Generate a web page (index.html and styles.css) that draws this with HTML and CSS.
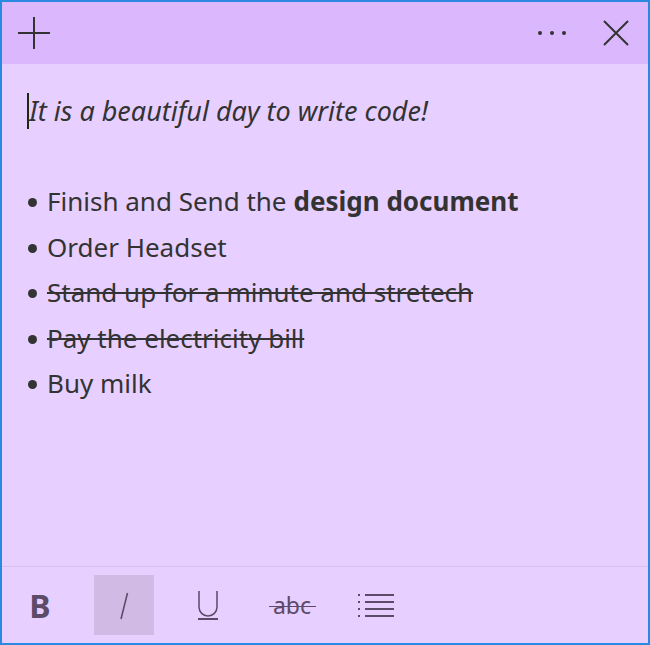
FILE: index.html
```html
<!DOCTYPE html>
<html lang="en">
<head>
<meta charset="utf-8">
<title>Sticky Note</title>
<link rel="stylesheet" href="styles.css">
</head>
<body>
<div class="window">
  <header class="titlebar">
    <button class="tb-btn" aria-label="New note">
      <svg width="32" height="32" viewBox="0 0 32 32"><path d="M0 16H32M16 0V32" stroke="#333" stroke-width="2" fill="none"/></svg>
    </button>
    <div class="tb-right">
      <button class="tb-btn" aria-label="More">
        <svg width="32" height="8" viewBox="0 0 32 8"><circle cx="4" cy="4" r="2" fill="#333"/><circle cx="16" cy="4" r="2" fill="#333"/><circle cx="28" cy="4" r="2" fill="#333"/></svg>
      </button>
      <button class="tb-btn" aria-label="Close">
        <svg width="26" height="26" viewBox="0 0 26 26"><path d="M1 1L25 25M25 1L1 25" stroke="#333" stroke-width="2" fill="none"/></svg>
      </button>
    </div>
  </header>
  <main class="content">
    <p class="line intro"><span class="caret"></span>It is a beautiful day to write code!</p>
    <p class="line empty"></p>
    <ul class="items">
      <li class="line">Finish and Send the <b>design document</b></li>
      <li class="line">Order Headset</li>
      <li class="line done">Stand up for a minute and stretech</li>
      <li class="line done">Pay the electricity bill</li>
      <li class="line">Buy milk</li>
    </ul>
  </main>
  <footer class="toolbar">
    <button class="fmt bold" aria-label="Bold">B</button>
    <button class="fmt active" aria-label="Italic">
      <svg width="20" height="30" viewBox="0 0 20 30"><path d="M13.5 3L7 29" stroke="#5b4b68" stroke-width="1.5" fill="none"/></svg>
    </button>
    <button class="fmt" aria-label="Underline">
      <svg width="24" height="32" viewBox="0 0 24 32"><path d="M3 2V18a9 9 0 0 0 18 0V2" stroke="#5b4b68" stroke-width="1.5" fill="none"/><path d="M2 30H22" stroke="#5b4b68" stroke-width="2" fill="none"/></svg>
    </button>
    <button class="fmt strike" aria-label="Strikethrough"><span class="abc">abc</span></button>
    <button class="fmt" aria-label="List">
      <svg width="38" height="26" viewBox="0 0 38 26"><g fill="#5b4b68"><rect x="1" y="2" width="2" height="2"/><rect x="1" y="9" width="2" height="2"/><rect x="1" y="16" width="2" height="2"/><rect x="1" y="23" width="2" height="2"/><rect x="8" y="2" width="29" height="2"/><rect x="8" y="9" width="29" height="2"/><rect x="8" y="16" width="29" height="2"/><rect x="8" y="23" width="29" height="2"/></g></svg>
    </button>
  </footer>
</div>
</body>
</html>
```

FILE: styles.css
```css
* { box-sizing: border-box; }
html, body { margin: 0; padding: 0; }
body {
  width: 650px;
  height: 645px;
  font-family: "Noto Sans", "Open Sans", sans-serif;
  color: #333;
}
.window {
  width: 650px;
  height: 645px;
  border: 2px solid #2a8ae2;
  background: #e7cfff;
  display: flex;
  flex-direction: column;
}
button {
  border: 0;
  background: transparent;
  padding: 0;
  margin: 0;
  font: inherit;
  color: inherit;
  display: flex;
  align-items: center;
  justify-content: center;
}
.titlebar {
  height: 62px;
  flex: none;
  background: #dbb8fe;
  display: flex;
  align-items: center;
  justify-content: space-between;
  padding: 0 8px;
}
.tb-right { display: flex; gap: 16px; }
.tb-btn { width: 48px; height: 48px; }
.content {
  flex: 1;
  padding: 24px 25px 0 25px;
}
.line {
  margin: 0;
  font-size: 26px;
  line-height: 45.5px;
  height: 45.5px;
  white-space: nowrap;
}
.intro { font-style: italic; font-size: 27px; display: flex; align-items: center; }
.caret {
  display: inline-block;
  width: 2px;
  height: 36px;
  background: #1d2810;
}
.items { list-style: none; margin: 0; padding: 0; }
.items li { display: flex; align-items: center; }
.items li::before {
  content: "";
  width: 9px;
  height: 9px;
  border-radius: 50%;
  background: #333;
  margin: 2px 10px 0 1px;
  flex: none;
}
.items b { font-weight: 700; margin-left: 7px; }
.done { text-decoration: line-through; text-decoration-thickness: 2px; }
.toolbar {
  height: 77px;
  flex: none;
  border-top: 1px solid #d8c0ee;
  display: flex;
  align-items: center;
  gap: 24px;
  padding: 0 8px;
}
.fmt {
  width: 60px;
  height: 60px;
  color: #5b4b68;
}
.fmt.active { background: #d1bbe5; }
.bold { font-weight: 700; font-size: 32px; }
.abc {
  position: relative;
  font-size: 23px;
  line-height: 1;
  padding: 0 3px;
}
.abc::after {
  content: "";
  position: absolute;
  left: -1px;
  right: -2px;
  top: 53%;
  height: 1.5px;
  background: #5b4b68;
}
```
